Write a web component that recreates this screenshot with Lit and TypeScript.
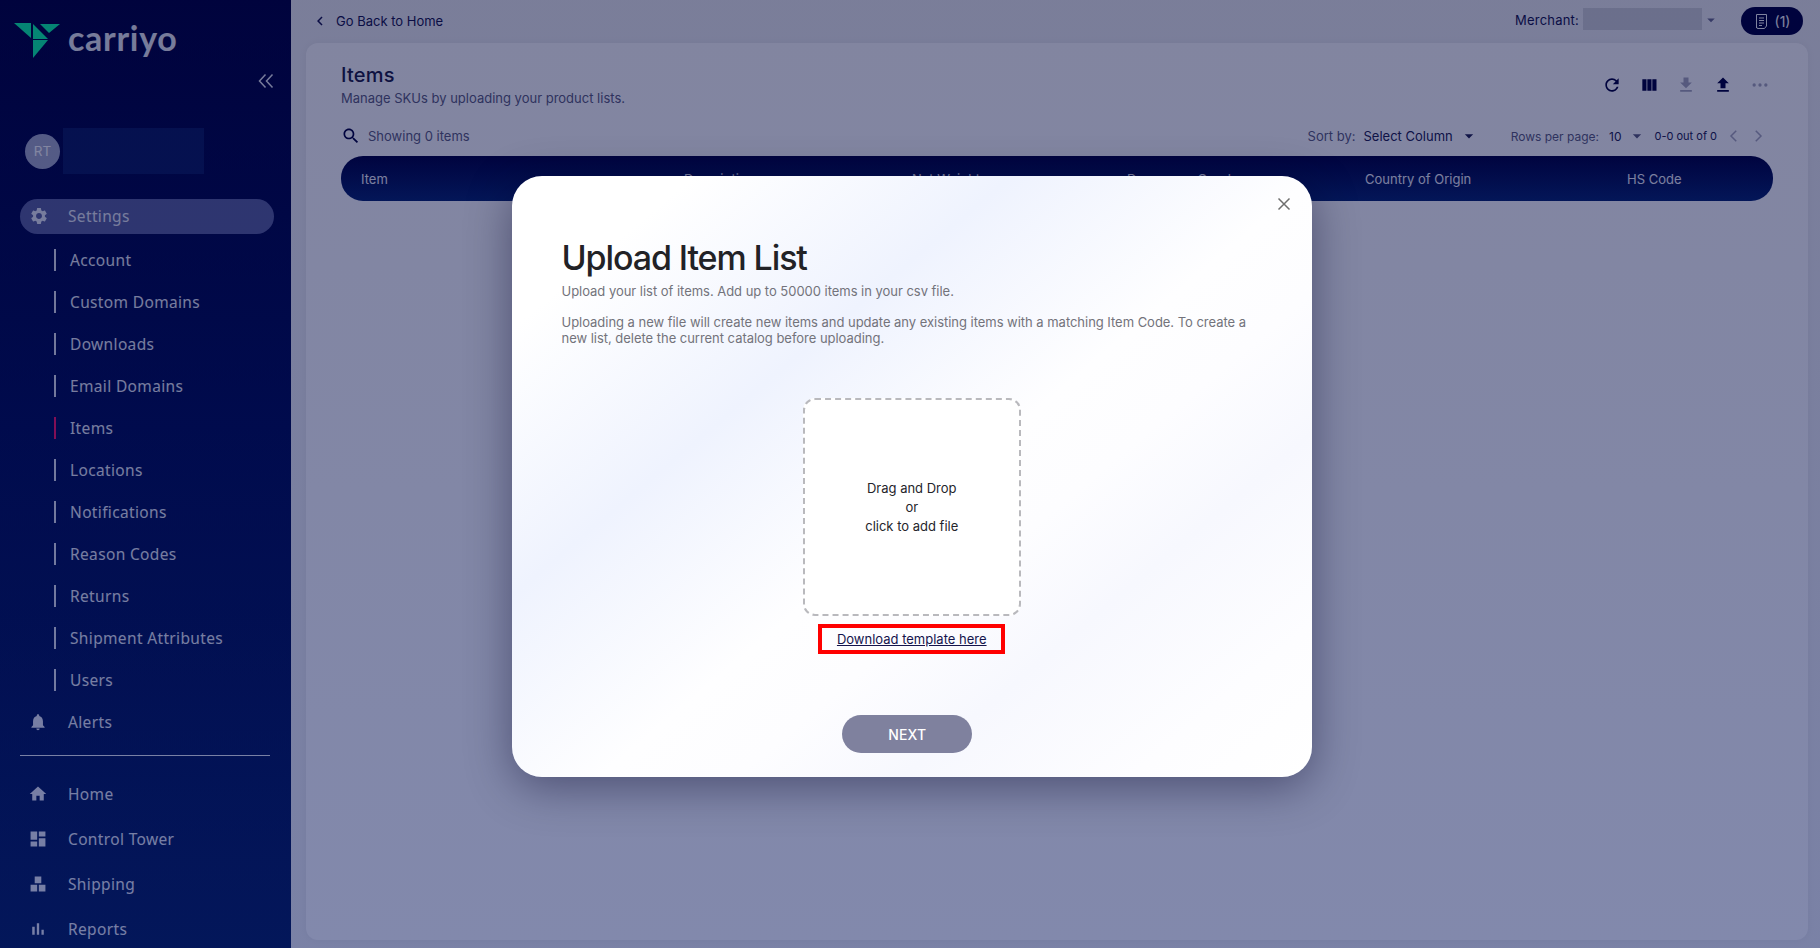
import { LitElement, html, css, svg } from "lit";
import { customElement } from "lit/decorators.js";

const ic = (d: unknown, cls = "") => html`<svg class="ic ${cls}" viewBox="0 0 24 24" fill="currentColor">${d}</svg>`;
const P = {
  settings: svg`<path d="M19.14 12.94c.04-.3.06-.61.06-.94 0-.32-.02-.64-.07-.94l2.03-1.58c.18-.14.23-.41.12-.61l-1.92-3.32c-.12-.22-.37-.29-.59-.22l-2.39.96c-.5-.38-1.03-.7-1.62-.94l-.36-2.54c-.04-.24-.24-.41-.48-.41h-3.84c-.24 0-.43.17-.47.41l-.36 2.54c-.59.24-1.13.57-1.62.94l-2.39-.96c-.22-.08-.47 0-.59.22L2.74 8.87c-.12.21-.08.47.12.61l2.03 1.58c-.05.3-.09.63-.09.94s.02.64.07.94l-2.03 1.58c-.18.14-.23.41-.12.61l1.92 3.32c.12.22.37.29.59.22l2.39-.96c.5.38 1.03.7 1.62.94l.36 2.54c.05.24.24.41.48.41h3.84c.24 0 .44-.17.47-.41l.36-2.54c.59-.24 1.13-.56 1.62-.94l2.39.96c.22.08.47 0 .59-.22l1.92-3.32c.12-.22.07-.47-.12-.61l-2.01-1.58zM12 15.6c-1.98 0-3.6-1.62-3.6-3.6s1.62-3.6 3.6-3.6 3.6 1.62 3.6 3.6-1.62 3.6-3.6 3.6z"/>`,
  bell: svg`<path d="M12 22c1.1 0 2-.9 2-2h-4c0 1.1.89 2 2 2zm6-6v-5c0-3.07-1.64-5.64-4.5-6.32V4c0-.83-.67-1.5-1.5-1.5s-1.5.67-1.5 1.5v.68C7.63 5.36 6 7.92 6 11v5l-2 2v1h16v-1l-2-2z"/>`,
  home: svg`<path d="M10 20v-6h4v6h5v-8h3L12 3 2 12h3v8z"/>`,
  dash: svg`<path d="M3 13h8V3H3v10zm0 8h8v-6H3v6zm10 0h8V11h-8v10zm0-18v6h8V3h-8z"/>`,
  ship: svg`<path d="M8 3h8v8H8zM3 13h8v8H3zM13 13h8v8h-8z"/>`,
  bars: svg`<path d="M5 9.2h3V19H5zM10.6 5h2.8v14h-2.8zm5.6 8H19v6h-2.8z"/>`,
  refresh: svg`<path d="M17.65 6.35C16.2 4.9 14.21 4 12 4c-4.42 0-7.99 3.58-7.99 8s3.57 8 7.99 8c3.73 0 6.84-2.55 7.73-6h-2.08c-.82 2.33-3.04 4-5.65 4-3.31 0-6-2.69-6-6s2.69-6 6-6c1.66 0 3.14.69 4.22 1.78L13 11h7V4l-2.35 2.35z"/>`,
  cols: svg`<path d="M10 19h5V5h-5v14zm-6 0h5V5H4v14zM16 5v14h5V5h-5z"/>`,
  down: svg`<path d="M19 9h-4V3H9v6H5l7 7 7-7zM5 18v2h14v-2H5z"/>`,
  up: svg`<path d="M9 16h6v-6h4l-7-7-7 7h4zm-4 2h14v2H5z"/>`,
  dots: svg`<circle cx="5" cy="12" r="2"/><circle cx="12" cy="12" r="2"/><circle cx="19" cy="12" r="2"/>`,
  search: svg`<path d="M15.5 14h-.79l-.28-.27C15.41 12.59 16 11.11 16 9.5 16 5.91 13.09 3 9.5 3S3 5.91 3 9.5 5.91 16 9.5 16c1.61 0 3.09-.59 4.23-1.57l.27.28v.79l5 4.99L20.49 19l-4.99-5zm-6 0C7.01 14 5 11.99 5 9.5S7.01 5 9.5 5 14 7.01 14 9.5 11.99 14 9.5 14z"/>`,
  back: svg`<path d="M15.4 7.4 14 6l-6 6 6 6 1.4-1.4L10.8 12z"/>`,
  thinback: svg`<path d="M15 5 8 12l7 7" fill="none" stroke="currentColor" stroke-width="2"/>`,
  thinnext: svg`<path d="M9 5l7 7-7 7" fill="none" stroke="currentColor" stroke-width="2"/>`,
  caret: svg`<path d="M7 10l5 5 5-5z"/>`,
};

const SUB = ["Account", "Custom Domains", "Downloads", "Email Domains", "Items", "Locations", "Notifications", "Reason Codes", "Returns", "Shipment Attributes", "Users"];
const BOTTOM: [unknown, string][] = [[P.home, "Home"], [P.dash, "Control Tower"], [P.ship, "Shipping"], [P.bars, "Reports"]];
const COLS: [string, number][] = [["Item", 323], ["Description", 228], ["Net Weight", 215], ["Dangerous Goods", 238], ["Country of Origin", 262], ["HS Code", 140]];

@customElement("app-root")
export class AppRoot extends LitElement {
  static styles = css`
    :host { display: block; width: 100vw; height: 100vh; overflow: hidden; position: relative; font-family: Inter, "Liberation Sans", sans-serif; color: #14144c; }
    * { box-sizing: border-box; }
    .ic { display: block; width: 24px; height: 24px; flex: none; }
    .shell { display: flex; height: 948px; background: #f0f1f3; }

    .side { width: 291px; flex: none; height: 948px; overflow: hidden; display: flex; flex-direction: column; color: #e9ecf4; background: linear-gradient(180deg, #00003e 0, #000c52 45%, #061f5e 100%); font-family: "Noto Sans", Inter, sans-serif; font-size: 15.5px; letter-spacing: .35px; }
    .side > * { flex: none; }
    .logo { height: 70px; padding: 22px 0 0 14px; display: flex; gap: 7px; align-items: flex-start; }
    .logo svg { width: 47px; height: 36px; flex: none; }
    .word { font-family: Lato, sans-serif; font-size: 34px; font-weight: 700; line-height: 36px; letter-spacing: .7px; margin-top: -2px; }
    .collapse { height: 30px; display: flex; justify-content: flex-end; padding-right: 15px; }
    .collapse svg { width: 20px; height: 20px; margin-top: 1px; }
    .user { height: 46px; margin-top: 28px; display: flex; align-items: center; padding-left: 25px; gap: 3px; }
    .avatar { width: 35px; height: 35px; border-radius: 50%; background: #a4abc8; color: #fff; display: flex; align-items: center; justify-content: center; font-size: 13.5px; letter-spacing: 0; font-family: Inter, sans-serif; }
    .redact { width: 141px; height: 46px; background: #0a1a5e; }
    .pill { margin: 24.5px 17px 0 20px; height: 35px; border-radius: 18px; background: #5a619c; display: flex; align-items: center; padding-left: 10px; gap: 20px; }
    .sub { display: flex; flex-direction: column; padding: 5.5px 0 0 54px; }
    .sub div { height: 42px; display: flex; align-items: center; gap: 14px; }
    .sub i { width: 2px; height: 22px; background: #fafcff; opacity: .9; }
    .sub i.on { background: #ff1464; opacity: 1; }
    .row { height: 45px; display: flex; align-items: center; padding-left: 29px; gap: 21px; }
    .row .ic, .pill .ic { width: 18px; height: 18px; transform: scale(1.1); }
    .row.alert { height: 36px; margin-top: 3px; }
    .rule { height: 1px; background: #fafcff; margin: 15px 21px 15px 20px; opacity: .95; }

    .main { flex: 1; min-width: 0; display: flex; flex-direction: column; padding: 7px 12px 8px 15px; }
    .top { height: 36px; flex: none; display: flex; align-items: flex-start; font-size: 13px; }
    .backlink { display: flex; align-items: center; height: 28px; gap: 7px; margin-left: 9px; }
    .backlink .ic { width: 18px; height: 18px; margin-left: -4px; }
    .merchant { margin-left: auto; display: flex; align-items: flex-start; margin-right: 10px; }
    .merchant span { height: 28px; line-height: 26px; margin-right: 4px; letter-spacing: .2px; }
    .merchant b { width: 119px; height: 22px; margin-top: 1px; background: #d2d4d8; display: block; }
    .merchant .ic { width: 18px; height: 18px; margin-top: 4px; margin-left: 0; color: #6a6c8e; }
    .basket { margin: 0 5px 0 11px; width: 62px; height: 28px; border-radius: 14px; background: #00003e; color: #fafcff; display: flex; align-items: center; justify-content: center; gap: 6px; font-size: 14px; }
    .basket svg { width: 15px; height: 17px; }
    .card { flex: 1; background: #fff; border-radius: 12px; padding: 19px 35px 0 35px; box-shadow: 0 0 8px rgba(0,0,40,.05); }
    .head { display: flex; justify-content: space-between; align-items: flex-start; height: 58px; }
    h1 { margin: 0; font-size: 20px; font-weight: 500; line-height: 26px; color: #1c1c44; letter-spacing: .2px; }
    .desc { font-size: 13px; line-height: 20px; color: #5c5d7c; letter-spacing: 0; }
    .tools { display: flex; gap: 17px; margin: 13px 3px 0 0; color: #00003e; }
    .tools .ic { width: 20px; height: 20px; }
    .tools .dim { color: #a8a9bb; }
    .filters { height: 32px; display: flex; align-items: center; font-size: 13px; color: #5c5d7c; }
    .filters .sic { width: 20px; height: 20px; margin-right: 7px; color: #00003e; }
    .dark { color: #20204e; }
    .sp { margin-left: auto; }
    .select { margin-left: 8px; }
    .gap-a { width: 6px; }
    .gap-b { width: 6px; }
    .filters .ca { width: 20px; height: 20px; }
    .rows { font-size: 12px; margin-left: 32px; }
    .rows-val { font-size: 12px; margin-left: 10px; }
    .range { font-size: 11px; color: #20204e; margin: 0 8px 0 7px; }
    .nav { width: 18px; height: 18px; color: #a8a9bb; margin-right: 6px; }
    .thead { height: 45px; border-radius: 22px; background: linear-gradient(180deg, #00003e, #06246e); color: #f0f2fa; display: flex; align-items: center; padding-left: 20px; font-size: 13px; margin-top: 4px; }

    .scrim { position: absolute; inset: 0; background: linear-gradient(180deg, rgba(0,6,60,.49), rgba(0,14,86,.49)); }
    .modal { position: absolute; left: 512px; top: 176px; width: 800px; height: 601px; border-radius: 30px; box-shadow: 0 10px 46px rgba(0,0,40,.42); padding: 62px 50px 0 49.5px; display: flex; flex-direction: column; align-items: stretch;
      background: linear-gradient(140deg, #fff 0%, #fff 12%, #eff3fe 33%, #fefeff 53%, #fdfdff 62%, #f7f8fe 73%, #fdfdff 88%, #fff 100%); }
    .close { position: absolute; right: 19px; top: 19px; width: 18px; height: 18px; color: #6e6e6e; }
    h2 { margin: 0; font-size: 34px; line-height: 40px; font-weight: 500; letter-spacing: -1.1px; color: #222226; }
    .modal p { margin: 0; font-size: 13px; line-height: 16px; color: #73737b; letter-spacing: -.03px; }
    .p1 { margin-top: 5px !important; }
    .p2 { margin-top: 15px !important; width: 700px; }
    .drop { align-self: center; margin: 52px 0 0 0; width: 218px; height: 218px; border: 2px dashed #b9b9bd; border-radius: 12px; background: #fff; display: flex; align-items: center; justify-content: center; text-align: center; font-size: 13px; line-height: 19px; color: #25252b; }
    .tpl { align-self: center; margin: 8px 0 0 0; width: 187px; height: 30px; border: 4px solid #f00; display: flex; align-items: center; justify-content: center; font-size: 13px; color: #14144c; text-decoration: underline; }
    .next { align-self: center; margin: 61px 0 0 -9px; width: 130px; height: 38px; border-radius: 19px; background: #7f819e; color: #fff; border: 0; font: 500 14px Inter, sans-serif; letter-spacing: .2px; }
  `;

  render() {
    return html`
      <div class="shell">
        <aside class="side">
          <div class="logo">
            <svg viewBox="0 0 47 36" fill="#0affa8">
              <path d="M0 1h17v15z" /><path d="M19 2l15 15H19z" /><path d="M26 2h20l-11 9z" /><path d="M19 18h15L19 36z" />
            </svg>
            <span class="word">carriyo</span>
          </div>
          <div class="collapse">
            <svg viewBox="0 0 20 20" fill="none" stroke="currentColor" stroke-width="1.5"><path d="M9.5 3.5 3.5 10l6 6.5M16.5 3.5 10.5 10l6 6.5" /></svg>
          </div>
          <div class="user"><span class="avatar">RT</span><span class="redact"></span></div>
          <div class="pill">${ic(P.settings)}<span>Settings</span></div>
          <div class="sub">
            ${SUB.map((s) => html`<div><i class=${s === "Items" ? "on" : ""}></i><span>${s}</span></div>`)}
          </div>
          <div class="row alert">${ic(P.bell)}<span>Alerts</span></div>
          <div class="rule"></div>
          ${BOTTOM.map(([d, t]) => html`<div class="row">${ic(d)}<span>${t}</span></div>`)}
        </aside>
        <main class="main">
          <div class="top">
            <div class="backlink">${ic(P.back)}<span>Go Back to Home</span></div>
            <div class="merchant"><span>Merchant:</span><b></b>${ic(P.caret)}</div>
            <div class="basket">
              <svg viewBox="0 0 15 17" fill="none" stroke="currentColor" stroke-width="1"><path d="M2.5 15V1.5h10V13l-2 2.5H4a1.5 1.5 0 0 1-1.5-1.5M5 5h5M5 7.5h5M5 10h5M5 12.5h3" /></svg>
              <span>(1)</span>
            </div>
          </div>
          <section class="card">
            <div class="head">
              <div><h1>Items</h1><div class="desc">Manage SKUs by uploading your product lists.</div></div>
              <div class="tools">
                ${ic(P.refresh)}${ic(P.cols)}${ic(P.down, "dim")}${ic(P.up)}${ic(P.dots, "dim")}
              </div>
            </div>
            <div class="filters">
              ${ic(P.search, "sic")}<span>Showing 0 items</span>
              <span class="sp">Sort by:</span><span class="dark select">Select Column</span>
              <span class="gap-a"></span>${ic(P.caret, "ca dark")}
              <span class="rows">Rows per page:</span><span class="dark rows-val">10</span>
              <span class="gap-b"></span>${ic(P.caret, "ca")}
              <span class="range">0-0 out of 0</span>${ic(P.thinback, "nav")}${ic(P.thinnext, "nav")}
            </div>
            <div class="thead">
              ${COLS.map(([t, w]) => html`<span style="width:${w}px">${t}</span>`)}
            </div>
          </section>
        </main>
      </div>
      <div class="scrim"></div>
      <div class="modal">
        <svg class="close" viewBox="0 0 18 18" fill="none" stroke="currentColor" stroke-width="1.5"><path d="M3.5 3.5l11 11M14.5 3.5l-11 11" /></svg>
        <h2>Upload Item List</h2>
        <p class="p1">Upload your list of items. Add up to 50000 items in your csv file.</p>
        <p class="p2">Uploading a new file will create new items and update any existing items with a matching Item Code. To create a new list, delete the current catalog before uploading.</p>
        <div class="drop"><div>Drag and Drop<br />or<br />click to add file</div></div>
        <div class="tpl">Download template here</div>
        <button class="next">NEXT</button>
      </div>
    `;
  }
}
